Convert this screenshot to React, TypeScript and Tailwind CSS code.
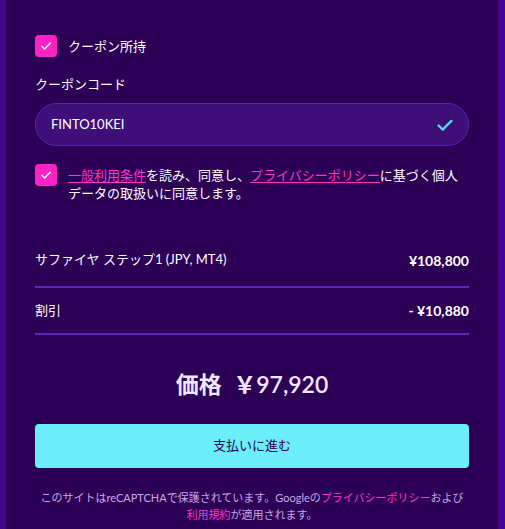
import React from "react";

const jp = { fontFamily: 'Lato, "Noto Sans CJK JP", "Noto Sans", sans-serif' };

const Check = ({ className }: { className?: string }) => (
  <svg viewBox="0 0 24 24" className={className} fill="none" stroke="currentColor" strokeWidth={2.5} strokeLinecap="round" strokeLinejoin="round">
    <path d="M5 12.5l4.5 4.5L19 7.5" />
  </svg>
);

const Box = () => (
  <div className="w-[22px] h-[22px] shrink-0 rounded-[4px] bg-[#ff22c4] flex items-center justify-center text-white">
    <Check className="w-[14px] h-[14px]" />
  </div>
);

export default function App() {
  return (
    <div className="w-[505px] h-[529px] bg-[#43078f] px-[6px] pr-[7px] overflow-hidden text-white" style={jp}>
      <div className="h-full bg-[#2c0055] px-[29px] pt-[35px]">
        {/* クーポン */}
        <div className="flex items-center gap-[11px]">
          <Box />
          <span className="text-[13px] leading-[20px]">クーポン所持</span>
        </div>
        <div className="mt-[17px] text-[13px] leading-[20px]">クーポンコード</div>
        <div className="mt-[9px] h-[43px] rounded-full bg-[#3f0f79] border border-[#5a23ab] flex items-center justify-between pl-[15px] pr-[12px]">
          <span className="text-[13px]">FINTO10KEI</span>
          <Check className="w-[22px] h-[22px] text-[#5ad8f0]" />
        </div>

        {/* 同意 */}
        <div className="mt-[18px] flex items-start gap-[11px]">
          <Box />
          <p className="text-[13px] leading-[18px] pt-[2px]">
            <span className="text-[#ff33cc] underline underline-offset-2">一般利用条件</span>を読み、同意し、
            <span className="text-[#ff33cc] underline underline-offset-2">プライバシーポリシー</span>に基づく個人データの取扱いに同意します。
          </p>
        </div>

        {/* 明細 */}
        <div className="mt-[36px]">
          <div className="flex items-center justify-between h-[50px] border-b-2 border-[#5f23b8] pb-[4px]">
            <span className="text-[13px]">サファイヤ ステップ1 (JPY, MT4)</span>
            <span className="text-[14px] font-bold">¥108,800</span>
          </div>
          <div className="flex items-center justify-between h-[47px] border-b-2 border-[#5f23b8]">
            <span className="text-[13px]">割引</span>
            <span className="text-[14px] font-bold">- ¥10,880</span>
          </div>
        </div>

        <div className="mt-[34px] text-center text-[23px] leading-[30px] font-semibold text-[#f1e6ff]">
          価格&nbsp;&nbsp;￥97,920
        </div>

        <button className="mt-[25px] w-full h-[44px] rounded-[4px] bg-[#6ceefa] text-[#2c0055] text-[13px]" style={jp}>
          支払いに進む
        </button>

        <p className="mt-[21px] -mx-[4px] text-center text-[11px] leading-[17px] text-[#c9a9ec]">
          このサイトはreCAPTCHAで保護されています。Googleの<span className="text-[#ff33cc]">プライバシーポリシー</span>および
          <br />
          <span className="text-[#ff33cc]">利用規約</span>が適用されます。
        </p>
      </div>
    </div>
  );
}
